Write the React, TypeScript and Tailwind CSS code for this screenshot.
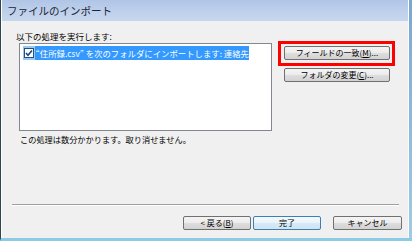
import React from "react";

function Btn({ children, def = false, className = "" }: { children: React.ReactNode; def?: boolean; className?: string }) {
  return (
    <div
      className={
        "h-[14px] flex items-center justify-center rounded-[2px] border text-[8px] leading-[12px] text-black " +
        (def
          ? "border-[#3c7fb1] bg-[linear-gradient(180deg,#f4f9fd_0%,#e8f3fb_50%,#d8eaf7_50%,#cfe3f2_100%)] "
          : "border-[#707070] bg-[linear-gradient(180deg,#f4f4f4_0%,#ececec_50%,#dedede_50%,#d2d2d2_100%)] ") +
        className
      }
    >
      {children}
    </div>
  );
}

export default function App() {
  return (
    <div className="w-[412px] h-[241px] flex font-['Noto_Sans_CJK_JP',sans-serif] bg-[#f0f0f0] border-l border-l-[#2e4650] border-b-[3px] border-b-[#8ccbe6]">
      <div className="flex-1 flex flex-col border-l border-l-white">
        <div className="h-[21px] shrink-0 flex items-center pl-[5px] bg-[linear-gradient(180deg,#b0c5e6_0%,#bfd1ec_60%,#c6d6ee_100%)] text-[10.5px] text-[#1c2533]">
          ファイルのインポート
        </div>
        <div className="flex-1 flex flex-col">
          <div className="flex pt-[9px] pl-[14px]">
            <div className="w-[257px] flex flex-col">
              <div className="text-[8.5px] leading-[12px] text-black">以下の処理を実行します:</div>
              <div className="mt-[1px] ml-[3px] w-[253px] h-[88px] bg-white border border-[#828790] pt-[2px] pl-[3px]">
                <div className="flex h-[14px] w-[226px]">
                  <div className="w-[14px] h-[14px] bg-[#9cc8f0] flex items-center justify-center">
                    <div className="w-[10px] h-[10px] bg-white border border-[#1c5180] flex items-center justify-center">
                      <svg width="8" height="8" viewBox="0 0 8 8">
                        <path d="M1 4 L3 6.2 L7 1.5" stroke="#21417a" strokeWidth="1.6" fill="none" />
                      </svg>
                    </div>
                  </div>
                  <div className="flex-1 bg-[#3399ff] text-white text-[8.4px] leading-[14px] pl-[1px] whitespace-nowrap">
                    “住所録.csv” を次のフォルダにインポートします: 連絡先
                  </div>
                </div>
              </div>
              <div className="mt-[2px] ml-[4px] text-[8.2px] leading-[12px] text-black">この処理は数分かかります。取り消せません。</div>
            </div>
            <div className="ml-[5px] pt-[11px] flex flex-col">
              <div className="w-[117px] h-[25px] border-[3px] border-[#ff0000] px-[3px] pt-[2px]">
                <Btn className="w-[106px]">
                  フィールドの一致(<span className="underline">M</span>)...
                </Btn>
              </div>
              <div className="mt-[2px] ml-[6px]">
                <Btn className="w-[106px]">
                  フォルダの変更(<span className="underline">C</span>)...
                </Btn>
              </div>
            </div>
          </div>
          <div className="mt-auto">
            <div className="ml-[10px] w-[387px] h-[2px] border-t border-t-[#a0a0a0] border-b border-b-white" />
            <div className="flex justify-end pr-[6px] mt-[10px] pb-[8px]">
              <Btn className="w-[68px]">
                &lt; 戻る(<span className="underline">B</span>)
              </Btn>
              <Btn def className="w-[68px] ml-[2px]">
                完了
              </Btn>
              <Btn className="w-[69px] ml-[12px]">キャンセル</Btn>
            </div>
          </div>
        </div>
      </div>
      <div className="w-[4px] shrink-0 flex">
        <div className="w-[1px] bg-white" />
        <div className="flex-1 bg-[linear-gradient(180deg,#7da6cf_0%,#9fcbe4_100%)]" />
      </div>
    </div>
  );
}
